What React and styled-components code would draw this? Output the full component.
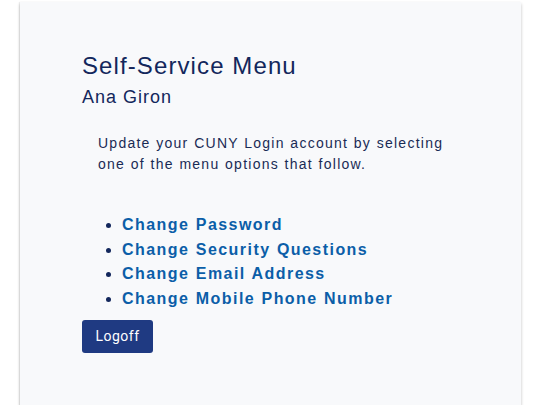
import React from "react";
import styled, { createGlobalStyle } from "styled-components";

const Global = createGlobalStyle`
  html, body { margin: 0; padding: 0; background: #ffffff; }
  body { font-family: "Liberation Sans", Arial, sans-serif; }
`;

const Page = styled.div`
  padding: 2px 23px 0 20px;
`;

const Card = styled.main`
  background: #f8f9fb;
  height: 403px;
  box-sizing: border-box;
  padding: 48px 62px 0 62px;
  box-shadow: 0 2px 3px rgba(0, 0, 0, 0.25), -1px 0 1px rgba(0, 0, 0, 0.06);
`;

const Title = styled.h1`
  margin: 0;
  font-size: 24px;
  font-weight: 400;
  letter-spacing: 1.1px;
  line-height: 32px;
  color: #13275c;
`;

const Name = styled.h2`
  margin: 2px 0 0;
  font-size: 18px;
  font-weight: 400;
  letter-spacing: 1px;
  line-height: 26px;
  color: #13275c;
`;

const Intro = styled.p`
  margin: 23px 0 0 16px;
  font-size: 14px;
  line-height: 21px;
  letter-spacing: 1.25px;
  word-spacing: 0.5px;
  color: #1a2b55;
  max-width: 360px;
`;

const Menu = styled.ul`
  margin: 38px 0 0;
  padding: 0 0 0 40px;
  color: #13275c;
`;

const Item = styled.li`
  line-height: 24.7px;
  font-size: 16px;
`;

const MenuLink = styled.a`
  color: #0b5ea8;
  font-weight: 700;
  letter-spacing: 1.45px;
  word-spacing: 0.5px;
  text-decoration: none;
`;

const Button = styled.button`
  margin-top: 8px;
  width: 71px;
  height: 33px;
  border: none;
  border-radius: 3px;
  background: #1f3a82;
  color: #ffffff;
  font-family: Roboto, "Liberation Sans", Arial, sans-serif;
  font-size: 14px;
  letter-spacing: 0.5px;
  cursor: pointer;
`;

const links = [
  "Change Password",
  "Change Security Questions",
  "Change Email Address",
  "Change Mobile Phone Number",
];

export default function App() {
  return (
    <>
      <Global />
      <Page>
        <Card>
          <Title>Self-Service Menu</Title>
          <Name>Ana Giron</Name>
          <Intro>
            Update your CUNY Login account by selecting one of the menu options
            that follow.
          </Intro>
          <Menu>
            {links.map((l) => (
              <Item key={l}>
                <MenuLink href="#">{l}</MenuLink>
              </Item>
            ))}
          </Menu>
          <Button>Logoff</Button>
        </Card>
      </Page>
    </>
  );
}
